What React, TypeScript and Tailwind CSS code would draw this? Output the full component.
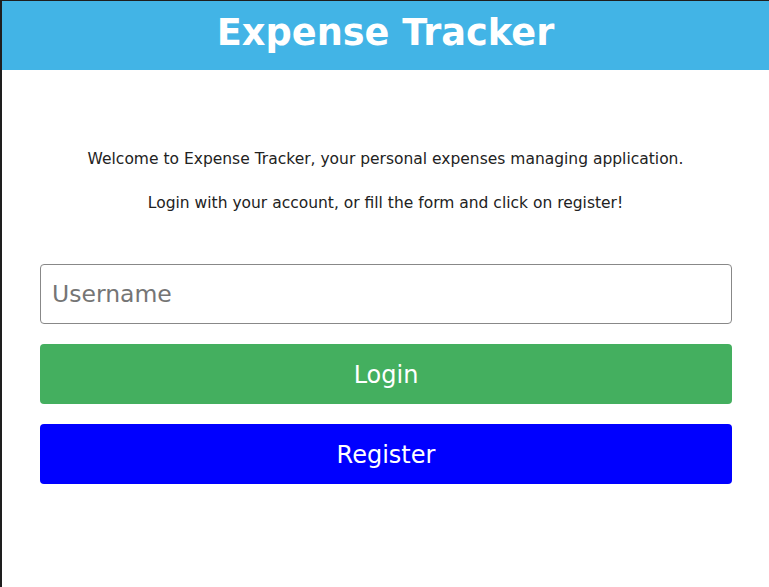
import React from "react";

export default function App() {
  return (
    <div className="w-[769px] h-[587px] bg-[#1e1e1e] pt-px pl-[2px] overflow-hidden">
      <div className="h-full bg-white flex flex-col" style={{ fontFamily: '"DejaVu Sans", sans-serif' }}>
        <header className="h-[69px] bg-[#42b4e6] flex items-center justify-center pb-[4px]">
          <h1 className="text-white font-bold text-[36.7px] leading-none">Expense Tracker</h1>
        </header>
        <div className="flex flex-col items-center pt-[79px] text-[15.5px] text-[#222]">
          <p className="leading-[20px]">Welcome to Expense Tracker, your personal expenses managing application.</p>
          <p className="leading-[20px] mt-[24px]">Login with your account, or fill the form and click on register!</p>
        </div>
        <div className="flex flex-col gap-[20px] pl-[38px] pr-[37px] mt-[51px]">
          <input
            placeholder="Username"
            className="h-[60px] w-full border border-[#888] rounded-[4px] px-[11px] text-[23.5px] placeholder:text-[#757575] outline-none"
          />
          <button className="h-[60px] w-full rounded-[4px] bg-[#44af5f] text-white text-[24px] pt-px">Login</button>
          <button className="h-[60px] w-full rounded-[4px] bg-[#0000ff] text-white text-[24px] pt-px">Register</button>
        </div>
      </div>
    </div>
  );
}
